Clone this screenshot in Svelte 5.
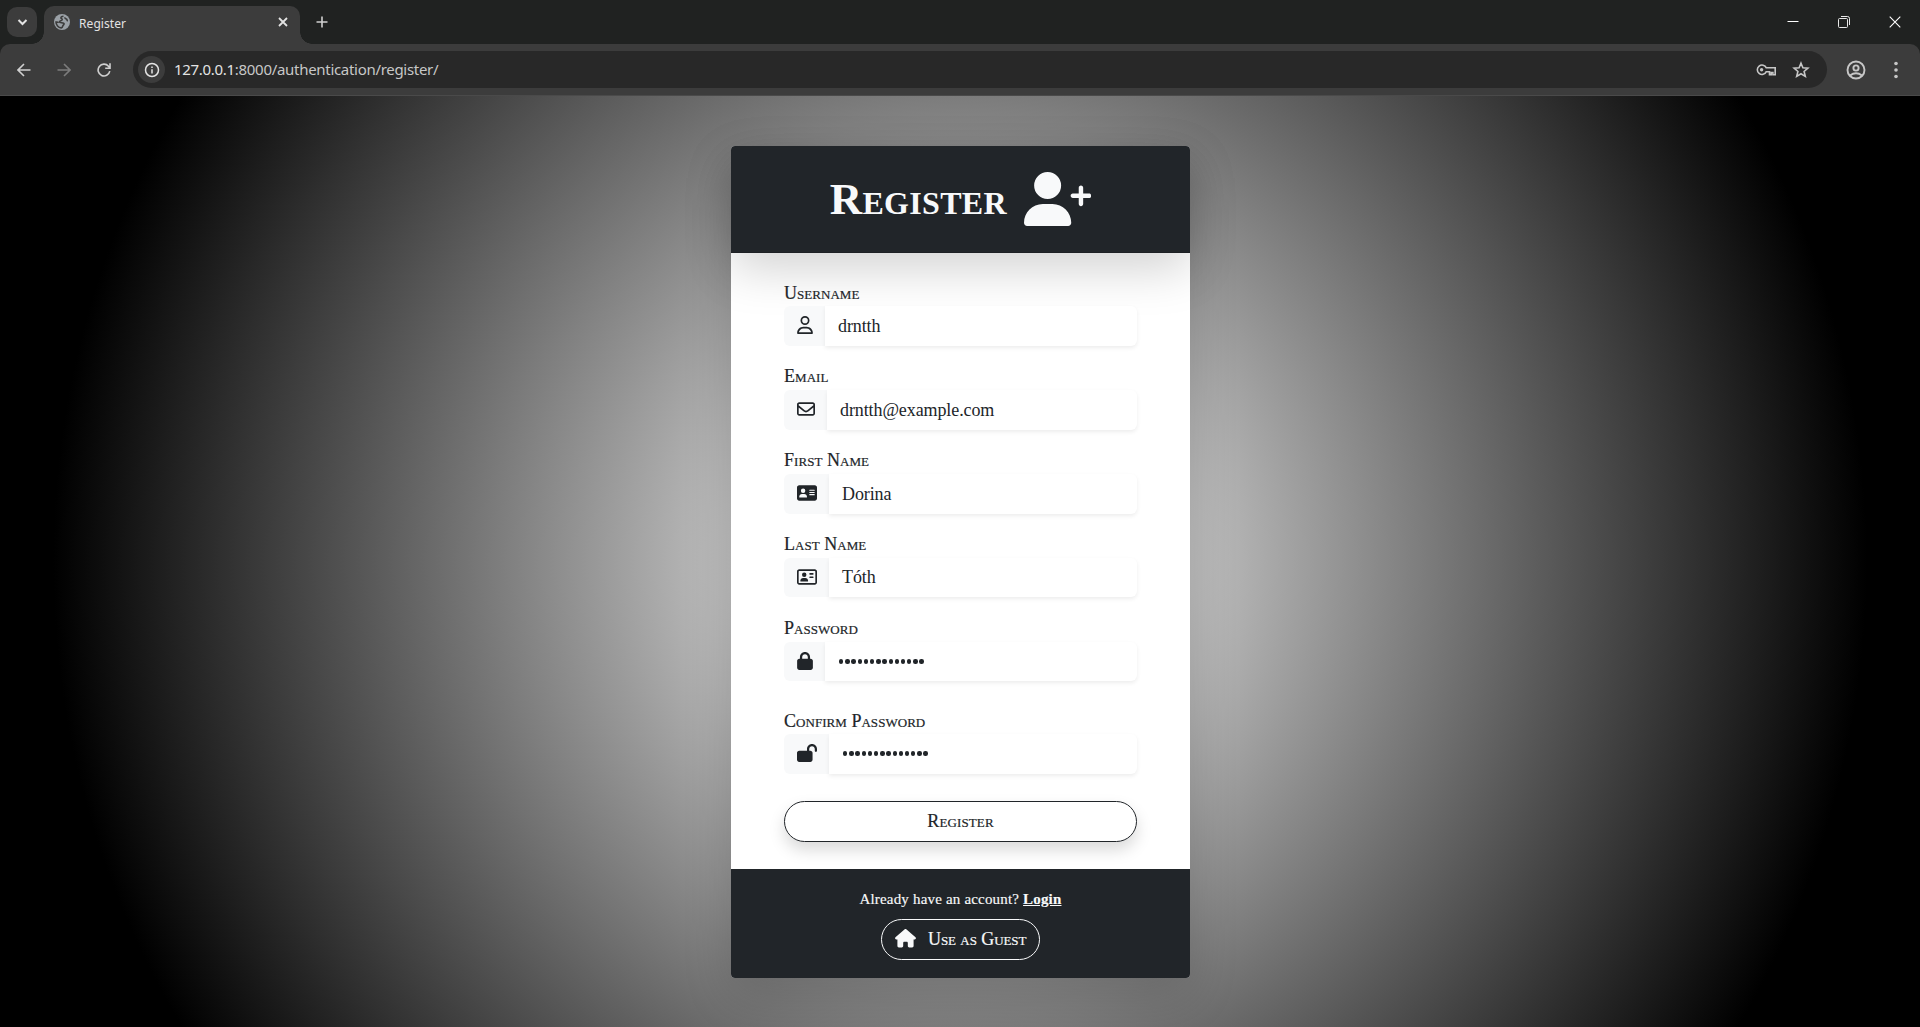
<script>
  const person = 'M96 128a128 128 0 1 1 256 0A128 128 0 1 1 96 128zM0 482.3C0 383.8 79.8 304 178.3 304h91.4C368.2 304 448 383.8 448 482.3c0 16.4-13.3 29.700-29.700 29.700H29.700C13.3 512 0 498.7 0 482.3z';
  const plus = 'M504 312V248H440c-13.3 0-24-10.7-24-24s10.7-24 24-24h64V136c0-13.3 10.7-24 24-24s24 10.700 24 24v64h64c13.3 0 24 10.700 24 24s-10.7 24-24 24H552v64c0 13.3-10.7 24-24 24s-24-10.700-24-24z';
  const house = 'M575.8 255.5c0 18-15 32.1-32 32.1h-32l.7 160.2c0 2.7-.2 5.4-.5 8.1V472c0 22.1-17.9 40-40 40H456c-1.100 0-2.200 0-3.300-.1c-1.400 .1-2.800 .1-4.200 .1H416 392c-22.100 0-40-17.900-40-40V448 384c0-17.700-14.300-32-32-32H256c-17.700 0-32 14.300-32 32v64 24c0 22.100-17.900 40-40 40H160 128.100c-1.500 0-3-.1-4.500-.2c-1.200 .1-2.400 .2-3.600 .2H104c-22.100 0-40-17.900-40-40V360c0-.9 0-1.900 .1-2.800V287.600H32c-18 0-32-14-32-32.100c0-9 3-17 10-24L266.400 8c7-7 15-8 22-8s15 2 21 7L564.800 231.500c8 7 12 15 11 24z';
  const icons = {
    user: { vw: 448, d: 'M304 128a80 80 0 1 0 -160 0 80 80 0 1 0 160 0zM96 128a128 128 0 1 1 256 0A128 128 0 1 1 96 128zM49.3 464H398.7c-8.9-63.3-63.3-112-129-112H178.3c-65.7 0-120.1 48.7-129 112zM0 482.3C0 383.8 79.8 304 178.3 304h91.4C368.2 304 448 383.8 448 482.3c0 16.4-13.3 29.7-29.7 29.7H29.7C13.3 512 0 498.7 0 482.3z' },
    mail: { vw: 512, d: 'M64 112c-8.8 0-16 7.2-16 16v22.1L220.5 291.7c20.7 17 50.4 17 71.1 0L464 150.1V128c0-8.8-7.2-16-16-16H64zM48 212.2V384c0 8.8 7.2 16 16 16H448c8.8 0 16-7.2 16-16V212.2L322 328.8c-38.4 31.5-93.7 31.5-132 0L48 212.2zM0 128C0 92.7 28.7 64 64 64H448c35.3 0 64 28.7 64 64V384c0 35.3-28.7 64-64 64H64c-35.3 0-64-28.7-64-64V128z' },
    cardSolid: { vw: 576, d: 'M64 32C28.7 32 0 60.7 0 96V416c0 35.3 28.7 64 64 64H512c35.3 0 64-28.7 64-64V96c0-35.3-28.7-64-64-64H64zm80 256h64c44.2 0 80 35.8 80 80c0 8.8-7.2 16-16 16H80c-8.8 0-16-7.2-16-16c0-44.2 35.8-80 80-80zm-32-96a64 64 0 1 1 128 0 64 64 0 1 1 -128 0zm256-32H496c8.8 0 16 7.2 16 16s-7.2 16-16 16H368c-8.8 0-16-7.2-16-16s7.2-16 16-16zm0 64H496c8.8 0 16 7.2 16 16s-7.2 16-16 16H368c-8.8 0-16-7.2-16-16s7.2-16 16-16zm0 64H496c8.8 0 16 7.2 16 16s-7.2 16-16 16H368c-8.8 0-16-7.2-16-16s7.2-16 16-16z' },
    card: { vw: 576, d: 'M512 80c8.8 0 16 7.2 16 16V416c0 8.8-7.2 16-16 16H64c-8.8 0-16-7.2-16-16V96c0-8.8 7.2-16 16-16H512zM64 32C28.7 32 0 60.7 0 96V416c0 35.3 28.7 64 64 64H512c35.3 0 64-28.7 64-64V96c0-35.3-28.7-64-64-64H64zM208 256a64 64 0 1 0 0-128 64 64 0 1 0 0 128zm-32 32c-44.2 0-80 35.8-80 80c0 8.8 7.2 16 16 16H304c8.8 0 16-7.2 16-16c0-44.2-35.8-80-80-80H176zM376 144c-13.3 0-24 10.7-24 24s10.7 24 24 24h80c13.3 0 24-10.7 24-24s-10.7-24-24-24H376zm0 96c-13.3 0-24 10.7-24 24s10.7 24 24 24h80c13.3 0 24-10.7 24-24s-10.7-24-24-24H376z' },
    lock: { vw: 448, d: 'M144 144v48H304V144c0-44.2-35.8-80-80-80s-80 35.8-80 80zM80 192V144C80 64.5 144.500 0 224 0s144 64.5 144 144v48h16c35.3 0 64 28.7 64 64V448c0 35.3-28.7 64-64 64H64c-35.3 0-64-28.7-64-64V256c0-35.3 28.7-64 64-64H80z' },
    unlock: { vw: 576, d: 'M352 144c0-44.2 35.8-80 80-80s80 35.8 80 80v48c0 17.7 14.3 32 32 32s32-14.3 32-32V144C576 64.5 511.5 0 432 0S288 64.5 288 144v48H64c-35.3 0-64 28.7-64 64V448c0 35.3 28.7 64 64 64H384c35.3 0 64-28.7 64-64V256c0-35.3-28.7-64-64-64H352V144z' }
  };
  const fields = [
    { label: 'Username', value: 'drntth', icon: 'user', w: 41, low: true },
    { label: 'Email', value: 'drntth@example.com', icon: 'mail', w: 43 },
    { label: 'First Name', value: 'Dorina', icon: 'cardSolid', w: 45 },
    { label: 'Last Name', value: 'Tóth', icon: 'card', w: 45, short: true },
    { label: 'Password', value: 'secretpassword', icon: 'lock', w: 41, secret: true, short: true },
    { label: 'Confirm Password', value: 'secretpassword', icon: 'unlock', w: 45, secret: true, gap: true, low: true }
  ];
</script>

<div class="window">
  <div class="tabs">
    <div class="chev"><svg width="30" height="30" viewBox="0 0 30 30"><path d="M11.5 13l4 4 4-4" fill="none" stroke="#e3e3e3" stroke-width="2" /></svg></div>
    <div class="tab">
      <svg class="globe" width="16" height="16" viewBox="0 0 16 16"><circle cx="8" cy="8" r="8" fill="#9aa0a6" /><path d="M9.500 2.200c-2 .2-2.800 1-2.500 2 .4.9 1.400.3 1.200 1.500-.3 1.400-2.700.8-2.700 2.300 0 1.200 3.200.4 4.300 1.300 1 .9-.6 1.500-.9 2.400-.3 1-.6 2-1.700 2.200C4.300 13.600 2 11 2 8q1.800-.2 2.600.8M11 3.200c-.3 1.300.4 1.500 1.400 1.900.9.4.4 1.400 1.400 1.800" fill="none" stroke="#3c3c3c" stroke-width="1.600" /></svg>
      <span>Register</span>
      <svg class="x" width="10" height="10" viewBox="0 0 10 10"><path d="M1 1l8 8M9 1l-8 8" stroke="#e3e3e3" stroke-width="1.800" /></svg>
    </div>
    <svg class="plus" width="12" height="12" viewBox="0 0 12 12"><path d="M6 .5v11M.5 6h11" stroke="#d0d0d0" stroke-width="1.600" /></svg>
    <div class="controls">
      <svg width="12" height="12" viewBox="0 0 12 12"><path d="M.5 5.500h11" stroke="#fff" /></svg>
      <svg width="12" height="12" viewBox="0 0 12 12" fill="none" stroke="#e8e8e8"><rect x=".5" y="2.500" width="9" height="9" rx="1" /><path d="M3 .5h6.500a2 2 0 0 1 2 2V9" /></svg>
      <svg width="12" height="12" viewBox="0 0 12 12"><path d="M.7.7l10.600 10.600M11.300.7L.7 11.300" stroke="#fff" stroke-width="1.100" /></svg>
    </div>
  </div>
  <div class="toolbar">
    <div class="nav">
      <svg width="14" height="14" viewBox="0 0 14 14" fill="none" stroke="#d0d0d0" stroke-width="1.600"><path d="M13.500 7H1.200M7 1L1 7l6 6" /></svg>
      <svg width="14" height="14" viewBox="0 0 14 14" fill="none" stroke="#7c7c7c" stroke-width="1.600"><path d="M.5 7h12.300M7 1l6 6-6 6" /></svg>
      <svg width="14" height="14" viewBox="0 0 14 14" fill="none" stroke="#d0d0d0" stroke-width="1.600"><path d="M12.800 8.200A5.900 5.900 0 1 1 11.500 3.200L13 4.800M13 .3v4.900H8.200" /></svg>
    </div>
    <div class="omni">
      <div class="info"><svg width="16" height="16" viewBox="0 0 16 16"><circle cx="8" cy="8" r="6.500" fill="none" stroke="#e3e3e3" stroke-width="1.500" /><path d="M8 7.200v4.200M8 4.500v1.600" stroke="#e3e3e3" stroke-width="1.500" /></svg></div>
      <span class="url"><b>127.0.0.1</b>:8000/authentication/register/</span>
      <svg class="key" width="20" height="12" viewBox="0 0 20 12" fill="none" stroke="#c7c7c7" stroke-width="1.600"><path d="M10.300 3.800A4.700 4.700 0 1 0 10.300 7.700H13.500v3h1.700V8.500h1.700v2.200h2.300V3.800z" /><circle cx="5.600" cy="5.700" r="1.700" fill="#c7c7c7" stroke="none" /></svg>
      <svg class="star" width="18" height="18" viewBox="0 0 18 18"><path d="M9 2.200l1.900 4.600 5 .4-3.800 3.300 1.200 4.900L9 12.800l-4.300 2.600 1.200-4.900-3.800-3.300 5-.4z" fill="none" stroke="#c7c7c7" stroke-width="1.600" /></svg>
    </div>
    <svg class="user" width="20" height="20" viewBox="0 0 20 20" fill="none" stroke="#c7c7c7" stroke-width="1.900"><circle cx="10" cy="10" r="8.500" /><circle cx="10" cy="8" r="2.600" /><path d="M4 15.500q6-4.500 12 0" /></svg>
    <svg class="dots" width="4" height="18" viewBox="0 0 4 18" fill="#c7c7c7"><circle cx="2" cy="2.500" r="1.800" /><circle cx="2" cy="9" r="1.800" /><circle cx="2" cy="15.500" r="1.800" /></svg>
  </div>

  <main>
    <section class="card">
      <header>
        <h1>Register</h1>
        <svg width="67.500" height="54" viewBox="0 0 640 512" fill="#f8f9fa"><path d={person} /><path d={plus} transform="translate(540 226) scale(.875) translate(-528 -224)" /></svg>
      </header>
      <form>
        {#each fields as f}
          <div class="field" class:gap={f.gap} class:low={f.low} class:short={f.short}>
            <label for={f.icon}>{f.label}</label>
            <div class="group">
              <span class="addon" style="width: {f.w}px">
                <svg height="18" width={f.w - 25} viewBox="0 0 {icons[f.icon].vw} 512" fill="#212529"><path d={icons[f.icon].d} /></svg>
              </span>
              <div class="input" id={f.icon}>
                {#if f.secret}
                  <span class="bullets">{#each f.value as _}<i></i>{/each}</span>
                {:else}{f.value}{/if}
              </div>
            </div>
          </div>
        {/each}
        <button class="submit" type="button">Register</button>
      </form>
      <footer>
        <p>Already have an account? <a href="#login">Login</a></p>
        <button class="guest" type="button">
          <svg width="21" height="18.500" viewBox="0 0 576 512" fill="#f8f9fa"><path d={house} /></svg>
          <span>Use as Guest</span>
        </button>
      </footer>
    </section>
  </main>
</div>

<style>
  :global(body) { margin: 0; background: #000; overflow: hidden; }
  * { box-sizing: border-box; }
  svg { display: block; flex: none; }
  .window { width: 1920px; height: 1027px; display: flex; flex-direction: column; font-family: "Liberation Serif", serif; color: #212529; background: #202221; }
  .tabs { height: 44px; display: flex; align-items: flex-start; flex: none; background: #202221; }
  .chev { width: 30px; height: 30px; margin: 7px 0 0 7px; border-radius: 10px; background: #3c3c3c; }
  .tab { position: relative; width: 256px; height: 38px; margin: 6px 0 0 7px; border-radius: 10px 10px 0 0; background: #3c3c3c; display: flex; align-items: center; padding: 0 12px 6px 10px; font: 12px "Noto Sans", sans-serif; color: #e3e3e3; }
  .tab::before, .tab::after { content: ""; position: absolute; bottom: 0; width: 12px; height: 12px; }
  .tab::before { left: -12px; background: radial-gradient(circle at 0 0, transparent 11.500px, #3c3c3c 12px); }
  .tab::after { right: -12px; background: radial-gradient(circle at 100% 0, transparent 11.500px, #3c3c3c 12px); }
  .tab span { margin: 3px auto 0 9px; letter-spacing: .08px; }
  .plus { margin: 16px 0 0 16px; }
  .controls { margin: 16px 19px 0 auto; display: flex; gap: 39px; }
  .toolbar { height: 52px; flex: none; display: flex; align-items: center; background: #3c3c3c; border-bottom: 1px solid #4a4a4a; border-radius: 10px 10px 0 0; }
  .nav { display: flex; gap: 26px; margin-left: 17px; width: 116px; }
  .omni { display: flex; align-items: center; width: 1694px; height: 37px; border-radius: 19px; background: #282828; padding: 0 17px 0 5px; }
  .info { width: 27px; height: 27px; border-radius: 50%; background: #3c3c3c; display: grid; place-items: center; }
  .url { margin: 0 auto 1px 9px; font: 15px "Noto Sans", sans-serif; color: #c7c7c7; letter-spacing: -.3px; }
  .url b { font-weight: 400; color: #e3e3e3; }
  .key { margin-right: 16px; }
  .user { margin-left: 19px; }
  .dots { margin-left: 28px; }
  main { flex: 1; display: flex; justify-content: center; align-items: flex-start; padding-top: 50px; background: radial-gradient(circle, #fff 0%, #000 85%); overflow: hidden; }
  .card { width: 459px; height: 832px; margin-left: 1px; border-radius: 4px; background: #fff; display: flex; flex-direction: column; box-shadow: 0 16px 48px rgba(0, 0, 0, .175); }
  header { height: 107px; border-radius: 4px 4px 0 0; background: #212529; border-bottom: 1px solid #1d2024; color: #f8f9fa; display: flex; justify-content: center; box-shadow: 0 16px 48px rgba(0, 0, 0, .175); padding: 26px 0 0; }
  h1 { margin: 0 17px 0 0; font-size: 45px; line-height: 54px; font-weight: 700; font-variant: small-caps; height: 54px; letter-spacing: .3px; }
  form { height: 616px; padding: 25px 53px 0; }
  .field { height: 84px; }
  .gap { margin-top: 8px; }
  label { display: block; height: 28px; line-height: 29px; font-size: 18px; font-variant: small-caps; letter-spacing: .04px; -webkit-text-stroke: .2px #212529; }
  .low label { line-height: 30px; }
  .group { display: flex; height: 40px; }
  .short .group { height: 39px; }
  .addon { background: #f8f9fa; border-radius: 6px 0 0 6px; padding: 0 0 2px 13px; display: flex; align-items: center; }
  .short .addon { padding-bottom: 1px; }
  .input { flex: 1; background: #fff; border-radius: 0 6px 6px 0; box-shadow: 0 2px 4px rgba(0, 0, 0, .075); padding-left: 13px; font-size: 18px; line-height: 40px; letter-spacing: -.1px; }
  .short .input { line-height: 38px; }
  .bullets { display: flex; height: 39px; align-items: center; padding-left: 1px; gap: 1.800px; }
  .bullets i { width: 4.400px; height: 4.400px; border-radius: 50%; background: #212529; }
  button { font-family: inherit; font-size: 18px; font-variant: small-caps; background: none; padding: 0; height: 41px; border-radius: 21px; }
  .submit { display: block; margin-top: 11px; width: 353px; border: 1px solid #212529; color: #212529; background: #fff; box-shadow: 0 8px 16px rgba(0, 0, 0, .15); letter-spacing: .12px; -webkit-text-stroke: .2px #212529; }
  footer { position: relative; flex: 1; background: #212529; border-radius: 0 0 4px 4px; color: #f8f9fa; display: flex; flex-direction: column; align-items: center; padding-top: 19px; }
  p { margin: 0 0 9px; font-size: 15px; line-height: 22px; letter-spacing: .18px; -webkit-text-stroke: .15px #f8f9fa; }
  a { color: inherit; font-weight: 700; }
  .guest { width: 159px; border: 1px solid #f8f9fa; color: #f8f9fa; display: flex; align-items: center; padding-left: 13px; gap: 12px; }
  .guest svg { margin-bottom: 2px; }
  .guest span { letter-spacing: -.08px; -webkit-text-stroke: .2px #f8f9fa; }
</style>
